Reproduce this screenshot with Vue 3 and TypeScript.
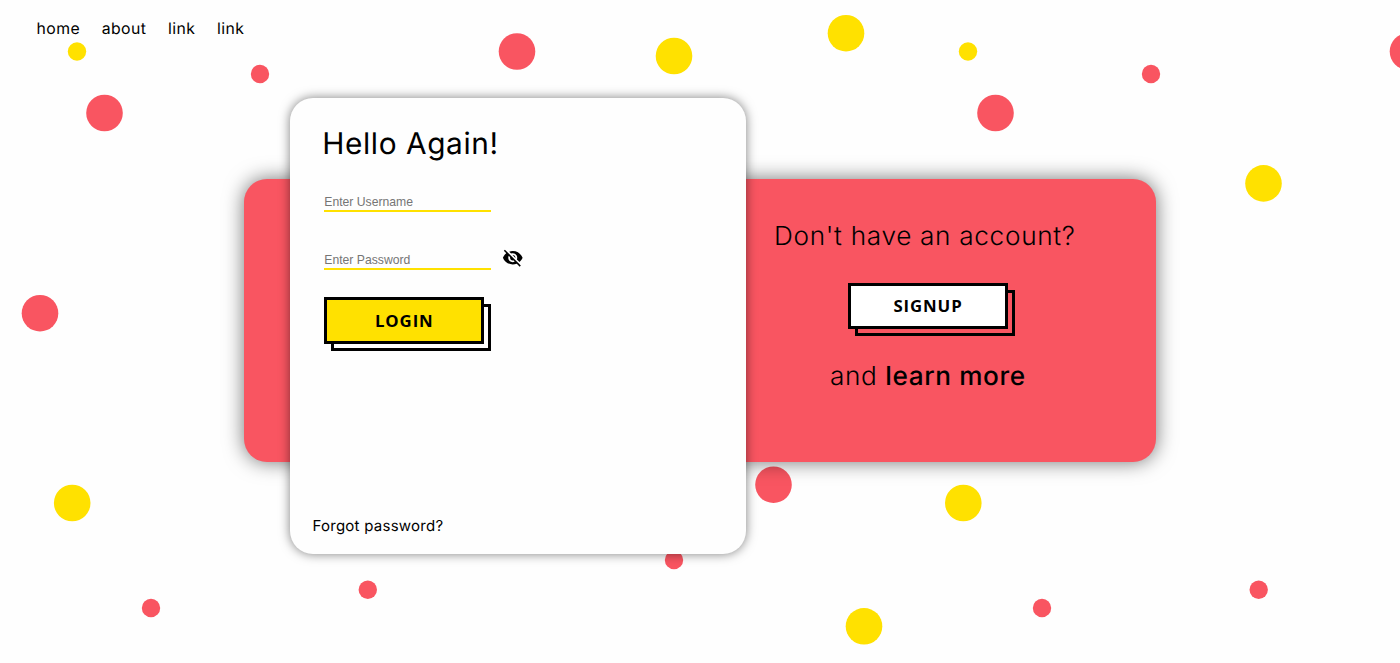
<script setup lang="ts">
import { ref } from 'vue'

interface Dot {
  x: number
  y: number
  r: number
  tone: 'red' | 'yellow'
}

const links: string[] = ['home', 'about', 'link', 'link']
const username = ref('')
const password = ref('')
const visible = ref(false)

const BIG = 18.3
const SMALL = 9.2
const dots: Dot[] = [
  { x: 77, y: 51.5, r: SMALL, tone: 'yellow' },
  { x: 104.5, y: 113, r: BIG, tone: 'red' },
  { x: 260, y: 74, r: SMALL, tone: 'red' },
  { x: 517, y: 51.5, r: BIG, tone: 'red' },
  { x: 674, y: 56, r: BIG, tone: 'yellow' },
  { x: 846, y: 33.2, r: BIG, tone: 'yellow' },
  { x: 968, y: 51.5, r: SMALL, tone: 'yellow' },
  { x: 995.5, y: 113, r: BIG, tone: 'red' },
  { x: 1151, y: 74, r: SMALL, tone: 'red' },
  { x: 1408, y: 51.5, r: BIG, tone: 'red' },
  { x: 1263.5, y: 183.4, r: BIG, tone: 'yellow' },
  { x: 40, y: 313.2, r: BIG, tone: 'red' },
  { x: 72.2, y: 503, r: BIG, tone: 'yellow' },
  { x: 151, y: 608, r: SMALL, tone: 'red' },
  { x: 367.8, y: 589.7, r: SMALL, tone: 'red' },
  { x: 674, y: 560, r: SMALL, tone: 'red' },
  { x: 773.5, y: 484.7, r: BIG, tone: 'red' },
  { x: 864, y: 626.3, r: BIG, tone: 'yellow' },
  { x: 963.3, y: 503, r: BIG, tone: 'yellow' },
  { x: 1042, y: 608, r: SMALL, tone: 'red' },
  { x: 1258.7, y: 589.7, r: SMALL, tone: 'red' },
]
</script>

<template>
  <div class="page">
    <svg class="dots" viewBox="0 0 1400 663" aria-hidden="true">
      <circle v-for="(d, i) in dots" :key="i" :cx="d.x" :cy="d.y" :r="d.r" :class="d.tone" />
    </svg>

    <nav class="nav">
      <a v-for="(l, i) in links" :key="i" href="#" class="nav-link">{{ l }}</a>
    </nav>

    <main class="stage">
      <section class="panel">
        <p class="lead question">Don't have an account?</p>
        <div class="btn-wrap signup-wrap">
          <button class="btn signup" type="button">SIGNUP</button>
        </div>
        <p class="lead more">and <a href="#" class="strong">learn more</a></p>
      </section>

      <section class="card">
        <h1 class="title">Hello Again!</h1>
        <form class="form" @submit.prevent>
          <input v-model="username" class="field" type="text" placeholder="Enter Username" />
          <div class="row">
            <input
              v-model="password"
              class="field"
              :type="visible ? 'text' : 'password'"
              placeholder="Enter Password"
            />
            <svg class="eye" viewBox="0 0 24 24" @click="visible = !visible">
              <path
                d="M12 7c2.76 0 5 2.24 5 5 0 .65-.13 1.26-.36 1.83l2.92 2.92c1.51-1.26 2.7-2.89 3.43-4.75-1.73-4.39-6-7.5-11-7.5-1.4 0-2.74.25-3.98.7l2.16 2.16C10.74 7.13 11.35 7 12 7zM2 4.27l2.28 2.28.46.46C3.08 8.3 1.78 10.02 1 12c1.73 4.39 6 7.5 11 7.5 1.55 0 3.03-.3 4.38-.84l.42.42L19.73 22 21 20.73 3.27 3 2 4.27zM7.53 9.8l1.55 1.55c-.05.21-.08.43-.08.65 0 1.66 1.34 3 3 3 .22 0 .44-.03.65-.08l1.55 1.55c-.67.33-1.41.53-2.2.53-2.76 0-5-2.24-5-5 0-.79.2-1.53.53-2.2zm4.31-.78l3.15 3.15.02-.16c0-1.66-1.34-3-3-3l-.17.01z"
              />
            </svg>
          </div>
          <div class="btn-wrap login-wrap">
            <button class="btn login" type="submit">LOGIN</button>
          </div>
        </form>
        <a href="#" class="forgot">Forgot password?</a>
      </section>
    </main>
  </div>
</template>

<style>
body {
  margin: 0;
  background: #fefefe;
}
</style>

<style scoped>
.page {
  position: relative;
  width: 1400px;
  height: 663px;
  overflow: hidden;
  background: #fefefe;
  color: #000;
  font-family: Inter, 'Liberation Sans', sans-serif;
  text-rendering: geometricPrecision;
}
a {
  color: inherit;
  text-decoration: none;
}
.dots {
  position: absolute;
  inset: 0;
  width: 100%;
  height: 100%;
}
.red {
  fill: #f95561;
}
.yellow {
  fill: #ffe100;
}
.nav {
  position: relative;
  box-sizing: border-box;
  height: 97.5px;
  padding: 19px 0 0 36.5px;
  display: flex;
  gap: 21.5px;
  font-size: 15.8px;
  line-height: 20px;
  font-weight: 400;
}
.nav-link {
  letter-spacing: 0.45px;
}
.stage {
  position: relative;
  display: grid;
  width: 912px;
  margin-left: 244px;
  grid-template: 456px / 912px;
  align-items: center;
}
.panel,
.card {
  grid-area: 1 / 1;
  box-sizing: border-box;
  border-radius: 23px;
}
.panel {
  height: 283px;
  margin-top: -9.5px;
  padding: 40px 0 0 530px;
  background: #f95561;
  box-shadow: 0 0 20px rgba(0, 0, 0, 0.55);
}
.card {
  position: relative;
  width: 456px;
  height: 456px;
  margin-left: 46px;
  padding: 26px 0 0 34.3px;
  background: #fefefe;
  box-shadow: 0 0 11px rgba(0, 0, 0, 0.5);
  display: flex;
  flex-direction: column;
}
.lead {
  margin: 0;
  font-size: 26.2px;
  line-height: 36px;
  font-weight: 300;
  white-space: nowrap;
}
.question {
  letter-spacing: 0.68px;
}
.more {
  margin: 30px 0 0 56px;
  letter-spacing: 0.6px;
}
.strong {
  font-weight: 500;
}
.title {
  margin: 0 0 0 -2px;
  font-size: 29.8px;
  line-height: 40px;
  font-weight: 400;
  letter-spacing: 0.6px;
  white-space: nowrap;
}
.form {
  display: flex;
  flex-direction: column;
  align-items: flex-start;
  margin-top: 27px;
}
.field {
  box-sizing: border-box;
  width: 166.5px;
  height: 21px;
  padding: 3px 0 0;
  border: 0;
  border-bottom: 2px solid #ffe100;
  background: transparent;
  font: 12.2px 'Liberation Sans', Arial, sans-serif;
  outline: none;
}
.field::placeholder {
  color: #757575;
}
.row {
  display: flex;
  margin-top: 37px;
}
.eye {
  width: 21.5px;
  height: 21.5px;
  margin: -1.5px 0 0 11px;
}
/* Offset outline sits behind the button face */
.btn-wrap {
  position: relative;
  width: 160px;
}
.btn-wrap::before {
  content: '';
  position: absolute;
  box-sizing: border-box;
  inset: 7px -7px -7px 7px;
  border: 3px solid #000;
}
.btn {
  position: relative;
  display: block;
  box-sizing: border-box;
  width: 100%;
  height: 46px;
  padding: 0;
  border: 3px solid #000;
  color: #000;
  font: 700 16.8px 'Open Sans', sans-serif;
  letter-spacing: 0.9px;
}
.login-wrap {
  margin-top: 27px;
}
.login {
  height: 47px;
  background: #ffe100;
}
.signup-wrap {
  margin: 27.5px 0 0 74px;
}
.signup {
  background: #fff;
}
.forgot {
  margin: auto auto 18px -11.8px;
  font-size: 15px;
  line-height: 20px;
  font-weight: 400;
  letter-spacing: 0.25px;
}
</style>
